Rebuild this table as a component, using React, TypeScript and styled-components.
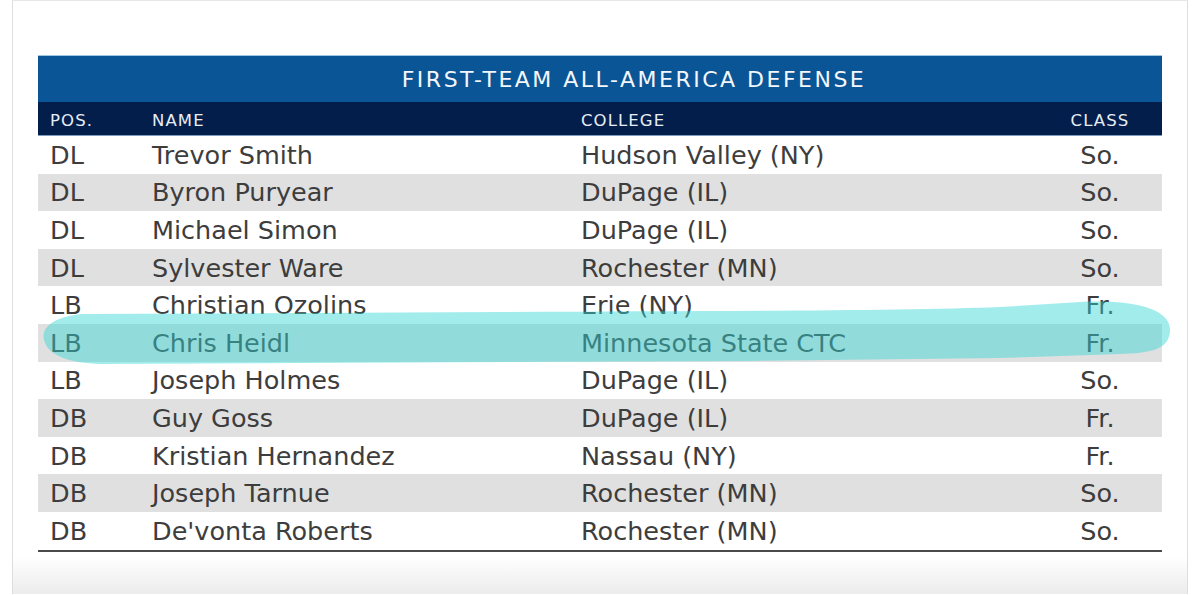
import styled, { createGlobalStyle } from "styled-components";

const GlobalStyle = createGlobalStyle`
  html, body {
    margin: 0;
    padding: 0;
    background: #ffffff;
  }
  body {
    font-family: "DejaVu Sans", "Liberation Sans", sans-serif;
  }
`;

type Player = { pos: string; name: string; college: string; cls: string };

const PLAYERS: Player[] = [
  { pos: "DL", name: "Trevor Smith", college: "Hudson Valley (NY)", cls: "So." },
  { pos: "DL", name: "Byron Puryear", college: "DuPage (IL)", cls: "So." },
  { pos: "DL", name: "Michael Simon", college: "DuPage (IL)", cls: "So." },
  { pos: "DL", name: "Sylvester Ware", college: "Rochester (MN)", cls: "So." },
  { pos: "LB", name: "Christian Ozolins", college: "Erie (NY)", cls: "Fr." },
  { pos: "LB", name: "Chris Heidl", college: "Minnesota State CTC", cls: "Fr." },
  { pos: "LB", name: "Joseph Holmes", college: "DuPage (IL)", cls: "So." },
  { pos: "DB", name: "Guy Goss", college: "DuPage (IL)", cls: "Fr." },
  { pos: "DB", name: "Kristian Hernandez", college: "Nassau (NY)", cls: "Fr." },
  { pos: "DB", name: "Joseph Tarnue", college: "Rochester (MN)", cls: "So." },
  { pos: "DB", name: "De'vonta Roberts", college: "Rochester (MN)", cls: "So." },
];

const Card = styled.div`
  position: relative;
  box-sizing: border-box;
  margin: 0 12px;
  height: 594px;
  padding: 54px 25px 0 25px;
  border-left: 1px solid #dedede;
  border-right: 1px solid #dedede;
  border-top: 1px solid #e6e6e6;
  background: linear-gradient(
    to bottom,
    #ffffff 0,
    #ffffff 556px,
    #ececec 592px
  );
`;

const Table = styled.div`
  position: relative;
  border-bottom: 2px solid #4a4a4a;
`;

const TitleBar = styled.div`
  height: 47px;
  box-sizing: border-box;
  border-top: 1px solid #9fc6e2;
  background: #0a5596;
  color: #f4f7fb;
  display: flex;
  align-items: center;
  justify-content: center;
  padding-left: 68px;
  font-size: 22px;
  letter-spacing: 2.5px;
`;

const Grid = styled.div`
  display: grid;
  grid-template-columns: 102px 429px 1fr 124px;
  align-items: center;
  padding-left: 12px;
`;

const HeaderRow = styled(Grid)`
  height: 34px;
  box-sizing: border-box;
  padding-top: 3px;
  background: #031e4b;
  border-bottom: 1px solid #7f9cbf;
  color: #e8edf4;
  font-size: 16.5px;
  letter-spacing: 1.1px;
`;

const Row = styled(Grid)<{ $striped: boolean }>`
  height: 37.6px;
  background: ${(p) => (p.$striped ? "#e0e0e0" : "#ffffff")};
  color: #3d3d3d;
  font-size: 25.5px;
`;

const Cell = styled.div<{ $center?: boolean }>`
  white-space: nowrap;
  text-align: ${(p) => (p.$center ? "center" : "left")};
`;

const Marker = styled.svg`
  position: absolute;
  left: -38px;
  top: -55px;
  pointer-events: none;
`;

export default function App() {
  return (
    <>
      <GlobalStyle />
      <Card>
        <Table>
          <TitleBar>FIRST-TEAM ALL-AMERICA DEFENSE</TitleBar>
          <HeaderRow>
            <Cell>POS.</Cell>
            <Cell>NAME</Cell>
            <Cell>COLLEGE</Cell>
            <Cell $center>CLASS</Cell>
          </HeaderRow>
          {PLAYERS.map((p, i) => (
            <Row key={p.name} $striped={i % 2 === 1}>
              <Cell>{p.pos}</Cell>
              <Cell>{p.name}</Cell>
              <Cell>{p.college}</Cell>
              <Cell $center>{p.cls}</Cell>
            </Row>
          ))}
          {/* highlighter stroke over the Chris Heidl row, page coords */}
          <Marker width="1200" height="595" viewBox="0 0 1200 595">
            <path
              d="M 46 345 C 38 330 50 317 82 314 L 500 312 C 700 311 900 311 1000 307 L 1080 302 C 1148 299 1172 314 1170 332 C 1168 350 1150 353 1120 354 L 1000 358 L 750 361 L 300 363 L 100 364 C 70 363 52 356 46 345 Z"
              fill="rgba(51, 213, 213, 0.45)"
            />
          </Marker>
        </Table>
      </Card>
    </>
  );
}
